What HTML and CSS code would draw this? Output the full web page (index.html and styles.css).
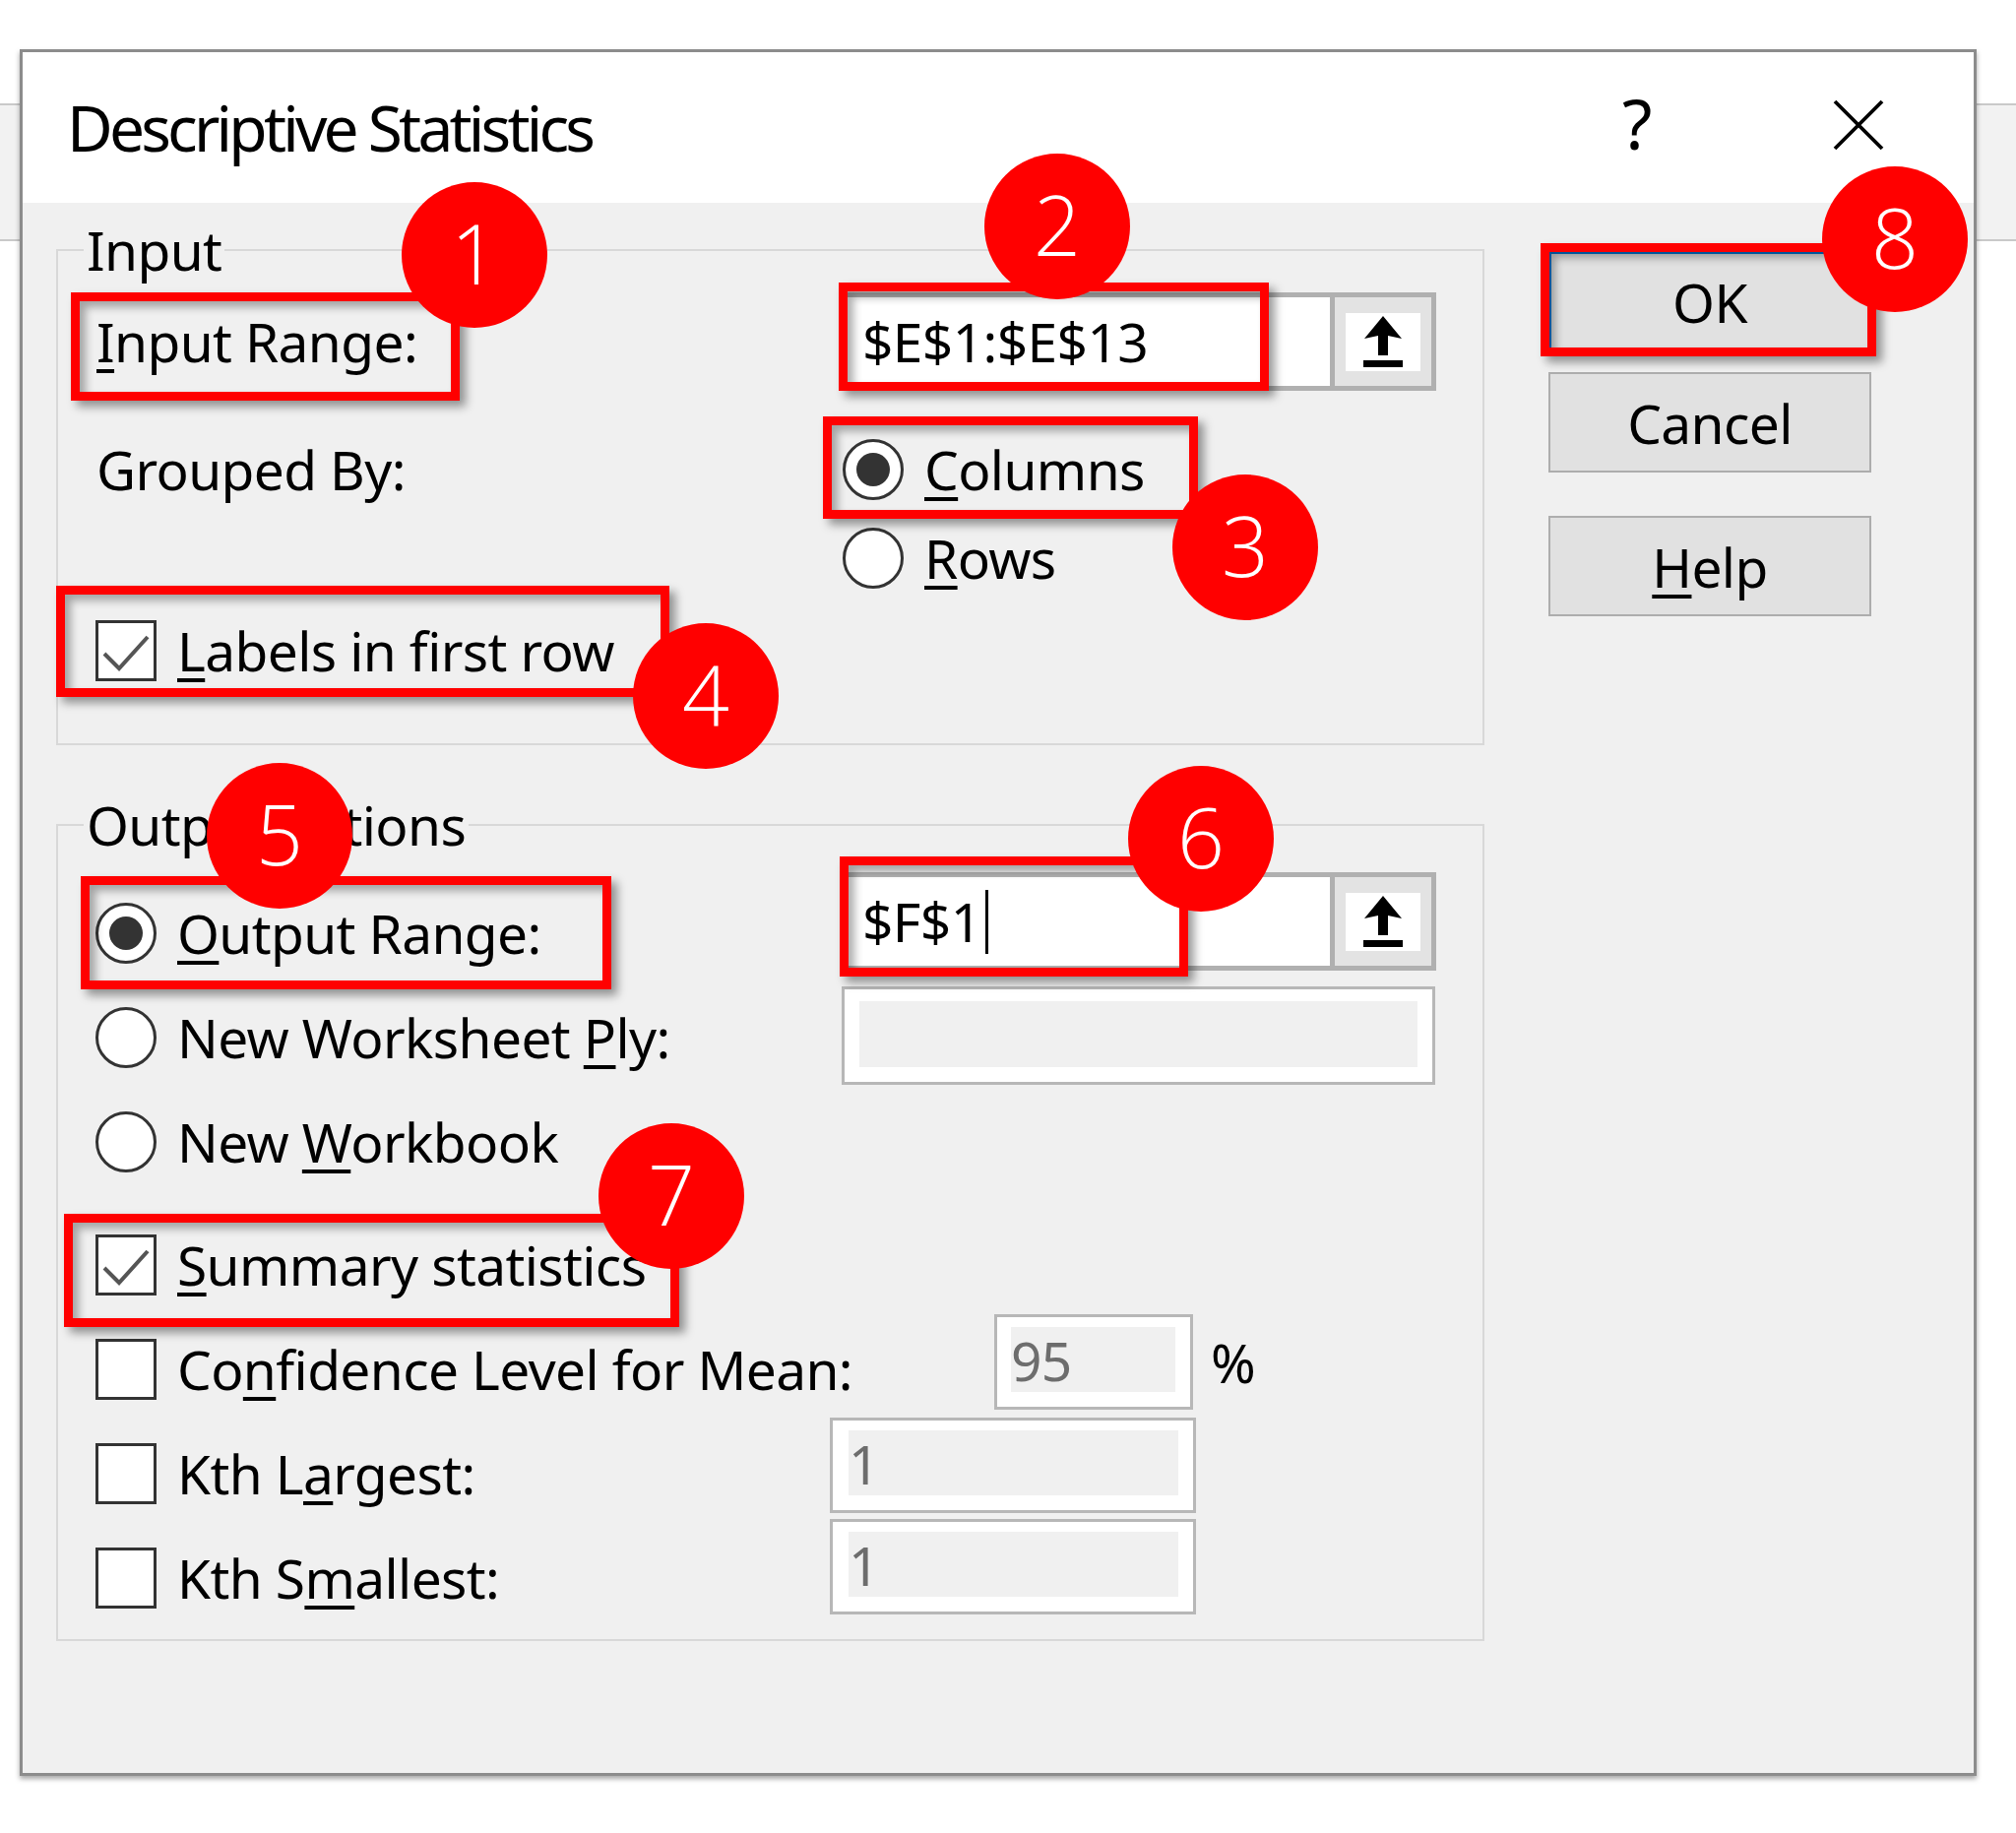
FILE: index.html
```html
<!DOCTYPE html>
<html lang="en">
<head>
<meta charset="utf-8">
<title>Descriptive Statistics</title>
<link rel="stylesheet" href="styles.css">
</head>
<body>
<div class="page">
  <div class="band"></div>

  <div class="dialog">
    <div class="titlebar">
      <span class="title">Descriptive Statistics</span>
      <span class="qmark">?</span>
      <svg class="close" width="52" height="52" viewBox="0 0 52 52"><path d="M2 2 L50 50 M50 2 L2 50" stroke="#000" stroke-width="3.8" fill="none"/></svg>
    </div>

    <div class="body">
      <div class="groups">
        <fieldset class="group g-in">
          <legend>Input</legend>
          <div class="row ra">
            <span class="c1"><u>I</u>nput Range:</span>
            <div class="refedit">
              <span class="val">$E$1:$E$13</span>
              <span class="pick"><span class="face"><svg width="40" height="52" viewBox="0 0 40 52"><path d="M20 0 L39 23 L25 20 L25 40 L15 40 L15 20 L1 23 Z" fill="#000"/><rect x="0" y="45" width="40" height="7" fill="#000"/></svg></span></span>
            </div>
          </div>
          <div class="row rb">
            <span class="c1">Grouped By:</span>
            <span class="opt o-right"><span class="radio on"></span><span class="txt"><u>C</u>olumns</span></span>
          </div>
          <div class="row rc">
            <span class="c1"></span>
            <span class="opt o-right"><span class="radio"></span><span class="txt"><u>R</u>ows</span></span>
          </div>
          <div class="row rd">
            <span class="opt"><span class="check on"><svg width="56" height="56" viewBox="0 0 56 56"><path d="M6 31 L21 46 L50 14" fill="none" stroke="#555" stroke-width="4"/></svg></span><span class="txt"><u>L</u>abels in first row</span></span>
          </div>
        </fieldset>

        <fieldset class="group g-out">
          <legend>Output options</legend>
          <div class="row r106 r-first">
            <span class="c1"><span class="opt"><span class="radio on"></span><span class="txt"><u>O</u>utput Range:</span></span></span>
            <div class="refedit up9">
              <span class="val">$F$1<span class="caret"></span></span>
              <span class="pick"><span class="face"><svg width="40" height="52" viewBox="0 0 40 52"><path d="M20 0 L39 23 L25 20 L25 40 L15 40 L15 20 L1 23 Z" fill="#000"/><rect x="0" y="45" width="40" height="7" fill="#000"/></svg></span></span>
            </div>
          </div>
          <div class="row r106">
            <span class="c1"><span class="opt"><span class="radio"></span><span class="txt">New Worksheet <u>P</u>ly:</span></span></span>
            <div class="field f-ply"><div class="fill"></div></div>
          </div>
          <div class="row r106">
            <span class="opt"><span class="radio"></span><span class="txt">New <u>W</u>orkbook</span></span>
          </div>
          <div class="row r106 r-sum">
            <span class="opt"><span class="check on"><svg width="56" height="56" viewBox="0 0 56 56"><path d="M6 31 L21 46 L50 14" fill="none" stroke="#555" stroke-width="4"/></svg></span><span class="txt"><u>S</u>ummary statistics</span></span>
          </div>
          <div class="row r106">
            <span class="c1 c1-conf"><span class="opt"><span class="check"></span><span class="txt">Co<u>n</u>fidence Level for Mean:</span></span></span>
            <div class="fw up3">
              <div class="field f-95"><div class="fill">95</div></div>
              <span class="pct">%</span>
            </div>
          </div>
          <div class="row r106">
            <span class="c1 c1-k"><span class="opt"><span class="check"></span><span class="txt">Kth L<u>a</u>rgest:</span></span></span>
            <div class="field f-k up4"><div class="fill">1</div></div>
          </div>
          <div class="row r106">
            <span class="c1 c1-k"><span class="opt"><span class="check"></span><span class="txt">Kth S<u>m</u>allest:</span></span></span>
            <div class="field f-k up7"><div class="fill">1</div></div>
          </div>
        </fieldset>
      </div>

      <div class="buttons">
        <div class="btn btn-ok">OK</div>
        <div class="btn btn-cancel">Cancel</div>
        <div class="btn btn-help"><u>H</u>elp</div>
      </div>
    </div>
  </div>

  <div class="mark m1"></div>
  <div class="mark m2"></div>
  <div class="mark m3"></div>
  <div class="mark m4"></div>
  <div class="mark m5"></div>
  <div class="mark m6"></div>
  <div class="mark m7"></div>
  <div class="mark m8"></div>

  <div class="badge b1">1</div>
  <div class="badge b2">2</div>
  <div class="badge b3">3</div>
  <div class="badge b4">4</div>
  <div class="badge b5">5</div>
  <div class="badge b6">6</div>
  <div class="badge b7">7</div>
  <div class="badge b8">8</div>
</div>
</body>
</html>
```

FILE: styles.css
```css
* { box-sizing: border-box; }

html, body {
  margin: 0;
  padding: 0;
  background: #ffffff;
}

body {
  font-family: "Noto Sans", "Open Sans", "DejaVu Sans", sans-serif;
  color: #000;
  font-size: 55px;
  letter-spacing: -0.6px;
}

.page {
  position: relative;
  width: 2048px;
  height: 1862px;
  padding-top: 105px;
  overflow: hidden;
}

.band {
  height: 140px;
  background: #f2f2f2;
  border-top: 2px solid #c9c9c9;
  border-bottom: 2px solid #c9c9c9;
}

/* ---------- dialog window ---------- */
.dialog {
  position: absolute;
  left: 20px;
  top: 50px;
  width: 1988px;
  height: 1754px;
  border: 3px solid #8c8c8c;
  background: #f0f0f0;
  box-shadow: 0 3px 5px rgba(0, 0, 0, 0.35);
  display: flex;
  flex-direction: column;
}

.titlebar {
  flex: none;
  height: 153px;
  background: #fff;
  display: flex;
  align-items: center;
  padding-left: 45px;
}

.title {
  font-size: 64px;
  line-height: 1;
  letter-spacing: -3.8px;
}

.qmark {
  margin-left: auto;
  width: 36px;
  font-size: 70px;
  font-weight: 400;
  line-height: 1;
  margin-bottom: 10px;
  letter-spacing: 0;
}

.close {
  margin-left: 178px;
  margin-right: 91px;
  margin-bottom: 6px;
}

.body {
  flex: 1;
  display: flex;
  align-items: flex-start;
  padding-left: 34px;
}

.groups {
  flex: none;
  width: 1451px;
}

/* ---------- group boxes ---------- */
.group {
  width: 1451px;
  margin: 0;
  padding: 0 0 0 39px;
  border: 2px solid #d8d8d8;
  min-inline-size: 0;
}

.group legend {
  font-size: 55px;
  line-height: 56px;
  padding: 0 3px;
  margin-left: -13px;
}

.g-in {
  margin-top: 20px;
  padding-bottom: 54px;
}

.g-out {
  margin-top: 53px;
  padding-bottom: 9px;
}

.row {
  display: flex;
  align-items: center;
  line-height: 1.2;
}

.c1 {
  flex: none;
  width: 757px;
}

.c1-conf { width: 912px; }
.c1-k { width: 745px; }

.ra { height: 100px; margin-top: 15px; }
.rb { height: 80px; margin-top: 40px; }
.rc { height: 80px; margin-top: 10px; }
.rd { height: 80px; margin-top: 14px; }

.r106 { height: 106px; }
.r-first { margin-top: 29px; }
.r-sum { margin-top: 19px; }

.opt {
  display: flex;
  align-items: center;
  margin-left: -1px;
}

.o-right { margin-left: 1px; }

.txt { margin-left: 21px; white-space: nowrap; }

u {
  text-decoration-thickness: 4px;
  text-underline-offset: 7px;
}

/* radio + check */
.radio {
  flex: none;
  width: 62px;
  height: 62px;
  border-radius: 50%;
  border: 3px solid #333;
  background: #fff;
  display: flex;
  align-items: center;
  justify-content: center;
}

.radio.on::after {
  content: "";
  width: 34px;
  height: 34px;
  border-radius: 50%;
  background: #333;
}

.check {
  flex: none;
  width: 62px;
  height: 62px;
  border: 3px solid #333;
  background: #fff;
  display: flex;
}

/* ---------- ref-edit boxes ---------- */
.refedit {
  flex: none;
  width: 604px;
  height: 100px;
  border: 5px solid #b0b0b0;
  background: #fff;
  display: flex;
  align-self: flex-start;
}

.up9 { margin-top: -9px; }
.up3 { margin-top: -3px; }
.up4 { margin-top: -4px; }
.up7 { margin-top: -7px; }

.val {
  flex: 1;
  display: flex;
  align-items: center;
  padding-left: 16px;
  white-space: nowrap;
}

.caret {
  display: inline-block;
  width: 3px;
  height: 65px;
  background: #000;
  margin-left: 4px;
}

.pick {
  flex: none;
  width: 103px;
  border-left: 5px solid #b0b0b0;
  background: #e3e3e3;
  display: flex;
  align-items: center;
  justify-content: center;
}

.face {
  width: 76px;
  height: 59px;
  background: #fff;
  display: flex;
  align-items: center;
  justify-content: center;
}

/* ---------- disabled / plain fields ---------- */
.field {
  flex: none;
  border: 3px solid #b7b7b7;
  background: #fff;
  padding: 10px 15px 15px 15px;
  display: flex;
  align-self: flex-start;
}

.fill {
  flex: 1;
  background: #f0f0f0;
  color: #6d6d6d;
  display: flex;
  align-items: center;
  line-height: 1;
}

.f-ply {
  width: 603px;
  height: 100px;
  margin-top: 1px;
  padding: 12px 15px 15px 15px;
}

.fw {
  display: flex;
  align-items: center;
  align-self: flex-start;
}

.fw .field { align-self: auto; }

.f-95 {
  width: 202px;
  height: 97px;
  padding-left: 14px;
}

.f-k {
  width: 372px;
  height: 97px;
  padding-left: 16px;
}

.pct {
  margin-left: 18px;
  line-height: 1;
}

/* ---------- buttons ---------- */
.buttons {
  flex: none;
  margin-left: 65px;
  display: flex;
  flex-direction: column;
}

.btn {
  width: 328px;
  height: 102px;
  border: 2px solid #adadad;
  background: #e1e1e1;
  display: flex;
  align-items: center;
  justify-content: center;
  line-height: 1;
}

.btn-ok {
  margin-top: 49px;
  border: 3px solid #0078d7;
}

.btn-cancel { margin-top: 21px; }
.btn-help { margin-top: 44px; }

/* ---------- annotation overlays ---------- */
.mark {
  position: absolute;
  border: 9px solid #ff0000;
  box-shadow: 6px 6px 9px rgba(0, 0, 0, 0.4), inset 6px 6px 9px rgba(0, 0, 0, 0.32);
}

.m1 { left: 72px;   top: 297px;  width: 395px; height: 110px; }
.m2 { left: 852px;  top: 287px;  width: 437px; height: 110px; }
.m3 { left: 836px;  top: 423px;  width: 381px; height: 104px; }
.m4 { left: 57px;   top: 595px;  width: 623px; height: 113px; }
.m5 { left: 82px;   top: 890px;  width: 539px; height: 115px; }
.m6 { left: 853px;  top: 870px;  width: 354px; height: 122px; }
.m7 { left: 65px;   top: 1233px; width: 625px; height: 115px; }
.m8 { left: 1565px; top: 247px;  width: 341px; height: 115px; }

.badge {
  position: absolute;
  width: 148px;
  height: 148px;
  border-radius: 50%;
  background: #ff0000;
  color: #fff;
  font-family: "Open Sans", "Noto Sans", sans-serif;
  font-weight: 300;
  font-size: 84px;
  letter-spacing: 0;
  line-height: 1;
  display: flex;
  align-items: center;
  justify-content: center;
  padding-bottom: 5px;
}

.b1 { left: 408px;  top: 185px; }
.b2 { left: 1000px; top: 156px; }
.b3 { left: 1191px; top: 482px; }
.b4 { left: 643px;  top: 633px; }
.b5 { left: 210px;  top: 775px; }
.b6 { left: 1146px; top: 778px; }
.b7 { left: 608px;  top: 1141px; }
.b8 { left: 1851px; top: 169px; }
```
